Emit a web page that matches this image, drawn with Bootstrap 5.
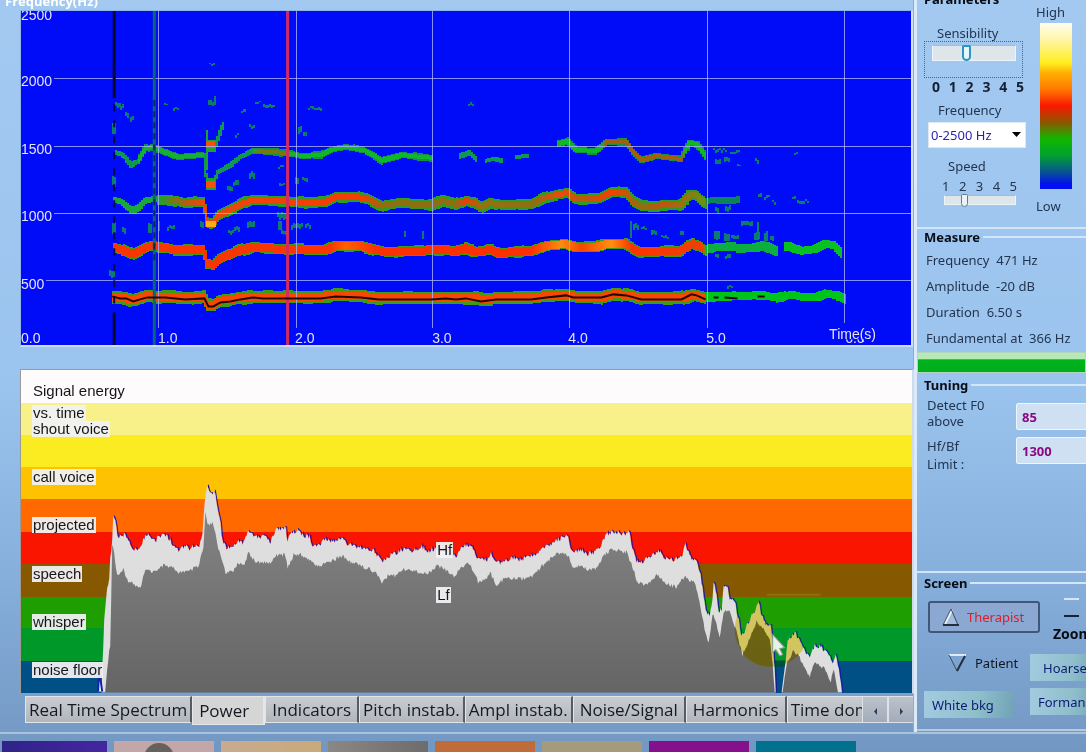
<!DOCTYPE html>
<html lang="en">
<head>
<meta charset="utf-8">
<meta name="viewport" content="width=device-width, initial-scale=1">
<title>Voice analysis</title>
<link href="https://cdn.jsdelivr.net/npm/bootstrap@5.3.0/dist/css/bootstrap.min.css" rel="stylesheet">
<style>
body{font-family:"Open Sans","Noto Sans",sans-serif;font-size:13px;line-height:18px;color:#23354f;background:linear-gradient(#a3c9f1 0,#9bc4ee 50%,#86aedb 78%,#7297c2 100%)}
.plots{padding-left:20px;min-width:0}
.axis-title{height:10px;line-height:14px;margin-left:-15px;color:#fff;font-weight:700;font-size:13px}
.axis-title span{display:block;margin-top:-6px}
.spectrogram{flex:337 1 0;background:#000cf8;border:1px solid #8fb4e6;border-right:3px solid #cfe3f7;border-bottom:2px solid #c9def6;min-height:0}
.energy{flex:325 1 0;margin-top:22px;border:1px solid #9a9a98;border-right:2px solid #cddcec;min-height:0;background:#fff}
.plot-svg{display:block;width:100%;height:100%;overflow:hidden}
.plot-svg text{font-family:"Liberation Sans",sans-serif;font-size:14px}
.axis text{fill:#e4e4f0}
.energy{position:relative}
.zones{font-family:"Liberation Sans",sans-serif;font-size:15px;line-height:16px;color:#16161a}
.zones span{position:absolute;left:11px;background:rgba(240,240,242,.95);padding:0 1px;white-space:nowrap}
.tabbar{height:38px;padding:2px 0 0 5px}
.view-tabs{min-width:0;flex:1;overflow:hidden;height:29px}
.view-tabs .nav-link{font-size:17px;line-height:20px;height:27px;padding:0 3px;color:#151a22;background:linear-gradient(#c9ccd0,#b2b5ba);border:1px solid #e0e5ea;border-right:2px solid #555c66;border-radius:0;margin:0;white-space:nowrap}
.view-tabs .nav-link.active{background:#d5d5d6;height:29px;line-height:26px;border-color:#e4e6e8;padding:0 14px 0 6px;color:#151a22}
.view-tabs .nav-link.roomy{padding:0 6px}
.scroll-btn{width:26px;height:27px;border:1px solid #dde2e8;background:linear-gradient(#bcc2cb,#a3acba);padding:0;line-height:10px}
.side{width:172px;font-family:"Noto Sans","Open Sans",sans-serif;border-left:3px solid #dbe9f8;box-shadow:-1px 0 #9aa8c0;overflow:hidden}
.group-head{font-size:13px;font-weight:700;color:#080c14;line-height:16px;margin:0;display:flex;align-items:center;gap:3px;padding-left:7px}
.group-head::after{content:"";flex:1;height:2px;background:#d3e5f8}
.group-box{border:0;border-bottom:2px solid #d3e5f8;min-width:0;margin:0;padding:0}
.params{height:229px}
.params .group-head{margin-top:-9px}
.scale-col{width:46px}
.heat{width:32px;height:166px;background:linear-gradient(#fffdf0 0,#fff6a8 10%,#ffee20 24%,#ffb000 30%,#ff7800 40%,#fa1800 50%,#8a5800 60%,#10b800 70%,#00a030 80%,#0848a0 91%,#0010f0 97%)}
.sense-box{width:99px;height:37px;border:1px dotted #4b6580;padding:3px 7px}
.ticks{font-size:14px}
.range{appearance:none;-webkit-appearance:none;display:block;margin:0;background:#dfe6ea;border:1px solid #eef4f8;border-top-color:#a9bac9}
.range::-webkit-slider-thumb{-webkit-appearance:none;width:9px;height:16px;background:#e8f4fa;border:2px solid #2b95c4;border-radius:2px 2px 5px 5px}
.range-lg{width:84px;height:16px}
.range-sm{width:72px;height:10px}
.range-sm::-webkit-slider-thumb{width:7px;height:13px;border:1px solid #66788a}
.freq{width:98px;height:26px;font-size:13px;line-height:18px;padding:3px 20px 3px 2px;border:1px solid #dde8f2;border-radius:0;color:#2a1fae;background-size:9px 6px;background-position:right 4px center;background-image:url("data:image/svg+xml,%3csvg xmlns='http://www.w3.org/2000/svg' viewBox='0 0 9 6'%3e%3cpath d='M0 0h9L4.5 5z' fill='%23000'/%3e%3c/svg%3e")}
.measure{height:144px}
.reading{line-height:26px;height:26px;padding-left:9px;white-space:pre}
.level{height:21px;border-radius:0;background:#c8e8c8;margin-top:1px;border:1px solid #b3d4be}
.level .progress-bar{background:linear-gradient(#b5eab5 0,#b5eab5 30%,#00b41c 36%,#00ac1c 100%)}
.tuning{height:196px;margin-top:4px}
.tune-label{line-height:16px;width:99px;padding-left:10px}
.tune-input{flex:1;min-width:0;width:60px;height:27px;border:1px solid #eef5fc;border-radius:2px;background:#cfe0f3;color:#8a0a84;font-size:13px;font-weight:700;padding:0 5px;margin-right:-3px}
.screen{height:156px;margin-top:2px;border-bottom:2px solid #b9c9da}
.screen-grid{display:grid;grid-template-columns:112px 1fr;column-gap:0;padding:10px 0 0 7px}
.mode{font-size:13px;line-height:18px;white-space:nowrap;border:0;background:none;color:#101820;padding:0;display:flex;align-items:center}
.mode-on{width:112px;height:32px;border:2px solid #3f5878;border-radius:3px;background:#8ba8d2;color:#d8202c;gap:7px;padding:0 0 0 12px}
.mode-off{height:28px;padding:0 0 0 20px;gap:8px;margin-top:16px}
.soft{font-size:13px;line-height:26px;height:27px;border:0;padding:0 8px;text-align:left;white-space:nowrap;color:#0c1c74;background:linear-gradient(100deg,#a3cbe0,#8fbecb 60%,#6fa3b5)}
.zoom-stack{padding-left:17px;color:#080c14;font-weight:700;font-size:14px;line-height:16px;white-space:nowrap}
.dash{width:15px;height:2px;margin-left:11px}
.film{height:20px;border-top:2px solid #a8c4dc;padding:7px 0 0 2px;gap:7px;overflow:hidden}
.film div{width:100px;flex:0 0 auto;height:12px;overflow:hidden}
.head-shape{width:30px!important;height:30px!important;border-radius:50%;background:#66605f;margin:2px 0 0 30px}
</style>
</head>
<body class="d-flex flex-column vh-100 overflow-hidden">
<div class="d-flex flex-fill" style="min-height:0">
<main class="plots d-flex flex-column flex-fill">
  <div class="axis-title"><span>Frequency(Hz)</span></div>
  <div class="spectrogram">
    <svg class="plot-svg" role="img" aria-label="Spectrogram">
      <svg viewBox="21 11 888 334" preserveAspectRatio="none" width="100%" height="100%">
        <defs><linearGradient id="g3" gradientUnits="userSpaceOnUse" x1="0" x2="1000" y1="0" y2="0">
          <stop offset=".16" stop-color="#20a030"/><stop offset=".175" stop-color="#8a7010"/><stop offset=".2" stop-color="#e84810"/><stop offset=".36" stop-color="#f83c00"/><stop offset=".385" stop-color="#8c7010"/><stop offset=".455" stop-color="#906c10"/><stop offset=".465" stop-color="#f03c08"/><stop offset=".48" stop-color="#987010"/><stop offset=".53" stop-color="#8c7010"/><stop offset=".56" stop-color="#f04808"/><stop offset=".58" stop-color="#b05c10"/><stop offset=".61" stop-color="#f44000"/><stop offset=".64" stop-color="#8c7010"/><stop offset=".66" stop-color="#c05410"/><stop offset=".703" stop-color="#709010"/><stop offset=".706" stop-color="#109058"/></linearGradient>
        <linearGradient id="g4" gradientUnits="userSpaceOnUse" x1="0" x2="1000" y1="0" y2="0">
          <stop offset=".25" stop-color="#18b030"/><stop offset=".26" stop-color="#787810"/><stop offset=".288" stop-color="#787810"/><stop offset=".29" stop-color="#10b828"/><stop offset=".6" stop-color="#10b828"/><stop offset=".605" stop-color="#a06010"/><stop offset=".68" stop-color="#a06010"/><stop offset=".685" stop-color="#10b828"/></linearGradient>
        <linearGradient id="g2" gradientUnits="userSpaceOnUse" x1="0" x2="1000" y1="0" y2="0">
          <stop offset=".33" stop-color="#fa3600"/><stop offset=".345" stop-color="#ff6000"/><stop offset=".375" stop-color="#fc3000"/><stop offset=".53" stop-color="#fc3000"/><stop offset=".56" stop-color="#ff8c10"/><stop offset=".58" stop-color="#f84400"/><stop offset=".61" stop-color="#ff9010"/><stop offset=".63" stop-color="#fc3400"/><stop offset=".701" stop-color="#f04000"/><stop offset=".706" stop-color="#10c020"/></linearGradient></defs>
        <g id="tracks" shape-rendering="crispEdges"></g>
        <g stroke="#a9b2ff" stroke-opacity=".8" stroke-width="1" shape-rendering="crispEdges">
          <path d="M54 78H912M54 146H912M54 213H912M46 280H912"/>
          <path d="M158 11V328M296 11V328M432 11V328M568 11V328M706 11V328M843 11V323"/>
        </g>
        <path d="M154 11V346" stroke="#0b6578" stroke-width="3"/>
        <path d="M154 100V260" stroke="#042c50" stroke-width="2" stroke-dasharray="6 5"/>
        <path d="M114 11V98" stroke="#050830" stroke-width="3"/>
        <path d="M114 104V310" stroke="#050850" stroke-width="2" stroke-dasharray="7 9"/>
        <path d="M114 312V346" stroke="#050830" stroke-width="3"/>
        <path d="M287 11V346" stroke="#d32a62" stroke-width="3"/>
        <g id="voice" fill="none"></g>
      </svg>
      <g class="axis">
        <text x="0" y="2.6%">2500</text><text x="0" y="22.4%">2000</text><text x="0" y="42.8%">1500</text><text x="0" y="62.8%">1000</text><text x="0" y="83%">500</text>
        <text x="0" y="99.2%">0.0</text><text x="15.4%" y="99.2%">1.0</text><text x="30.8%" y="99.2%">2.0</text><text x="46.2%" y="99.2%">3.0</text><text x="61.5%" y="99.2%">4.0</text><text x="77%" y="99.2%">5.0</text>
        <text x="92.6%" y="99.2%">6.0</text>
        <rect x="90.5%" y="93.4%" width="54" height="16" fill="#000cf8"/>
        <text x="90.8%" y="98%">Time(s)</text>
      </g>
    </svg>
  </div>
  <div class="energy">
    <svg class="plot-svg" viewBox="21 370 889 323" preserveAspectRatio="none" role="img" aria-label="Signal energy">
      <defs><clipPath id="hfClip"><path id="hfClipPath"/></clipPath>
      <linearGradient id="lf" x2="0" y2="1"><stop stop-color="#838383"/><stop offset="1" stop-color="#656565"/></linearGradient></defs>
      <g shape-rendering="crispEdges"><path fill="#fdfbfc" d="M21 370h890v33H21z"/><path fill="#f8f18a" d="M21 403h890v32H21z"/><path fill="#fbec22" d="M21 435h890v32H21z"/><path fill="#ffc200" d="M21 467h890v32H21z"/><path fill="#ff6900" d="M21 499h890v33H21z"/><path fill="#f91500" d="M21 532h890v32H21z"/><path fill="#865800" d="M21 564h890v33H21z"/><path fill="#1e9e00" d="M21 597h890v31H21z"/><path fill="#009828" d="M21 628h890v33H21z"/><path fill="#005086" d="M21 661h890v32H21z"/></g>
      <path d="M765 595h54" stroke="#8a7200" stroke-width="2"/>
      <path d="M760 661h36q-12 8-26 6z" fill="#00503c"/>
      <path id="hfEdge" fill="none" stroke="#2016a0" stroke-width="1" transform="translate(1 0)"/>
      <path id="hfArea" fill="#dedede"/>
      <path id="lfArea" fill="url(#lf)"/>
      <path d="M98 692l1-22 3 22" fill="#fff" stroke="#1424a8" stroke-width="2"/>
      <circle cx="770" cy="630" r="37" fill="#f2e26c" style="mix-blend-mode:multiply" clip-path="url(#hfClip)"/>
      <path d="M741 655L748 640 755 622 762 630 768 640 771 667Q752 668 741 655z" fill="#6e6200" fill-opacity=".6"/>
      <path d="M771 635v18l3-3 4 6 3-1-3-6 5-1z" fill="#e8f0e8" stroke="#8aa08a" stroke-width="1"/>
    </svg>
    <div class="zones">
      <span style="top:4%;background:none">Signal energy</span><span style="top:10.6%">vs. time</span><span style="top:15.6%">shout voice</span><span style="top:30.4%">call voice</span><span style="top:45.5%">projected</span><span style="top:60.5%">speech</span><span style="top:75.4%">whisper</span><span style="top:90.4%">noise floor</span>
      <span style="top:53.2%;left:46.6%">Hf</span><span style="top:67%;left:46.6%">Lf</span>
    </div>
  </div>
  <div class="tabbar d-flex align-items-start">
    <div class="nav view-tabs flex-nowrap" role="tablist">
      <button class="nav-link" role="tab">Real Time Spectrum</button><button class="nav-link active" role="tab" aria-selected="true">Power</button><button class="nav-link roomy" role="tab">Indicators</button><button class="nav-link" role="tab">Pitch instab.</button><button class="nav-link" role="tab">Ampl instab.</button><button class="nav-link roomy" role="tab">Noise/Signal</button><button class="nav-link roomy" role="tab">Harmonics</button><button class="nav-link" role="tab">Time domain</button>
    </div>
    <button class="scroll-btn" aria-label="Previous tabs"><svg width="5" height="7"><path d="M4 0v7L1 3.5z" fill="#2c3c58"/></svg></button>
    <button class="scroll-btn" aria-label="Next tabs"><svg width="5" height="7"><path d="M1 0v7l3-3.5z" fill="#2c3c58"/></svg></button>
  </div>
</main>
<aside class="side flex-shrink-0">
  <fieldset class="group-box params">
    <legend class="group-head">Parameters</legend>
    <div class="d-flex">
      <div style="width:115px">
        <div style="padding:18px 0 0 7px">
          <label for="sens" class="d-block" style="padding-left:13px;line-height:16px">Sensibility</label>
          <div class="sense-box"><input class="range range-lg" type="range" id="sens" min="0" max="5" step="0.1" value="2"></div>
          <div class="ticks fw-bold d-flex justify-content-between" style="width:100px;padding-left:8px;color:#142034"><span>0</span><span>1</span><span>2</span><span>3</span><span>4</span><span>5</span></div>
          <label for="freq" class="d-block" style="padding:5px 0 3px 14px">Frequency</label>
          <select id="freq" class="form-select freq" style="margin-left:4px"><option>0-2500 Hz</option></select>
          <label for="speed" class="d-block" style="padding:9px 0 2px 24px">Speed</label>
          <div class="d-flex justify-content-between" style="width:93px;padding-left:18px"><span>1</span><span>2</span><span>3</span><span>4</span><span>5</span></div>
          <input class="range range-sm" type="range" id="speed" min="1" max="5" value="2" style="margin-left:20px">
        </div>
      </div>
      <div class="scale-col">
        <div style="line-height:18px;padding:0 0 2px 4px;margin-top:-4px">High</div>
        <div class="heat ms-2"></div>
        <div style="padding:8px 0 0 4px">Low</div>
      </div>
    </div>
  </fieldset>
  <fieldset class="group-box measure">
    <legend class="group-head" style="padding-bottom:2px">Measure</legend>
    <div class="reading">Frequency  471 Hz</div>
    <div class="reading">Amplitude  -20 dB</div>
    <div class="reading">Duration  6.50 s</div>
    <div class="reading">Fundamental at  366 Hz</div>
    <div class="progress level" role="progressbar" aria-label="Level"><div class="progress-bar w-100"></div></div>
  </fieldset>
  <fieldset class="group-box tuning">
    <legend class="group-head">Tuning</legend>
    <div class="d-flex align-items-start" style="padding-top:4px"><label for="f0" class="tune-label">Detect F0<br>above</label><input id="f0" class="tune-input" style="margin-top:6px" value="85"></div>
    <div class="d-flex align-items-start" style="padding-top:7px"><label for="hf" class="tune-label" style="line-height:18px">Hf/Bf<br>Limit :</label><input id="hf" class="tune-input" value="1300"></div>
  </fieldset>
  <fieldset class="group-box screen">
    <legend class="group-head">Screen</legend>
    <div class="screen-grid">
      <div style="padding-left:4px">
        <button class="mode mode-on"><svg width="18" height="20"><path d="M9 2l7 16H2z" fill="#a4bbdc"/><path d="M3 17L10 3" stroke="#eef4fa" stroke-width="2" fill="none"/><path d="M1 18L9 2" stroke="#4c5c70" stroke-width="1" fill="none"/><path d="M9 2l7 16" stroke="#3a4a5c" stroke-width="1" fill="none"/><path d="M1 18h16" stroke="#22303c" stroke-width="2" fill="none"/></svg>Therapist</button>
        <button class="mode mode-off"><svg width="19" height="20"><path d="M1 2h17" stroke="#dfeaf6" stroke-width="2" fill="none"/><path d="M1 2l8 16" stroke="#3a4a5c" stroke-width="1" fill="none"/><path d="M17 3L9 18" stroke="#22303c" stroke-width="2" fill="none"/></svg>Patient</button>
      </div>
      <div class="zoom-stack"><div class="dash" style="background:#d8e6f4;margin-bottom:15px;margin-top:-3px"></div><div class="dash" style="background:#1a222c;margin-bottom:9px"></div>Zoom
        <button class="soft d-block" style="margin:12px 0 0 -23px;width:70px;padding-left:13px">Hoarse</button>
      </div>
      <button class="soft" style="width:90px;margin:10px 0 0 0">White bkg</button>
      <button class="soft" style="width:70px;margin:7px 0 0 -6px">Forman</button>
    </div>
  </fieldset>
</aside>
</div>
<div class="film d-flex">
  <div style="width:105px;background:linear-gradient(90deg,#2f2388,#4526a0)"></div><div style="background:#c2a6a8"><div class="head-shape"></div></div><div style="background:linear-gradient(90deg,#c8ab90,#c8a97a)"></div><div style="background:linear-gradient(90deg,#8a8784,#6e6c6c)"></div><div style="background:#bf6c3a"></div><div style="background:#a49b7c"></div><div style="background:#85108c"></div><div style="background:#00728e"></div>
</div>
<script src="https://cdn.jsdelivr.net/npm/bootstrap@5.3.0/dist/js/bootstrap.bundle.min.js"></script>
<script>
// Small repeatable noise source so the traces look the same at every load.
let seed = 11;
const rnd = () => (seed = (seed * 16807) % 2147483647) / 2147483647;
const parse = s => s.trim().split(/\s+/).map(p => p.split(',').map(Number));
const at = (pts, x) => {
  for (let i = 1; i < pts.length; i++) if (x <= pts[i][0]) {
    const [a, b] = pts[i - 1], [c, d] = pts[i];
    return c === a ? d : b + (d - b) * (x - a) / (c - a);
  }
  return pts[pts.length - 1][1];
};
const NS = 'http://www.w3.org/2000/svg';
const add = (id, d, fill) => {
  const p = document.createElementNS(NS, 'path');
  p.setAttribute('d', d); p.setAttribute('fill', fill);
  document.getElementById(id).append(p);
};
// One harmonic: a blocky green rim with a hotter core.
function track(str, rim, core, rimFill, coreFill) {
  const pts = parse(str), end = pts[pts.length - 1][0]; let a = '', b = '', up = 0, dn = 0, n = 0;
  for (let x = pts[0][0]; x < end; x += 2) {
    const y0 = at(pts, x), y1 = at(pts, x + 2), y = Math.round(Math.min(y0, y1)), g = Math.round(Math.abs(y1 - y0));
    if (n++ % 5 === 0) { up = rnd() < .3 ? 1 : 0; dn = rnd() < .3 ? 1 : 0; }
    a += `M${x} ${y - rim - up}h2v${2 * rim + g + up + dn}h-2z`;
    if (core) b += `M${x} ${y - core}h2v${2 * core + g}h-2z`;
  }
  add('tracks', a, rimFill);
  if (core) add('tracks', b, coreFill);
}
track('112,298 126,298 133,300 147,296 165,297 185,298 204,297 208,305 214,305 220,301 240,298 252,297 320,297 335,295 360,296 378,298 430,298 475,298 480,299 505,298 530,298 545,296 565,295 575,297 600,297 612,294 625,295 640,298 680,298 690,295 704,298', 6, 4, '#3c9c18', '#f84800');
track('704,297 722,297 760,295 775,298 790,295 800,297 815,297 825,294 835,295 844,299', 4, 0, '#00c41c');
track('113,248 122,250 131,254 138,252 146,247 153,246 165,248 175,250 204,250 207,264 213,265 220,258 230,254 240,250 252,247 280,249 325,250 335,246 360,246 375,250 385,252 440,250 455,251 465,248 475,252 490,250 500,253 530,251 545,246 565,244 575,247 595,247 605,244 625,244 632,249 640,252 680,251 690,244 697,246 704,251', 5, 4, '#3c9c18', 'url(#g2)');
track('704,249 715,247 750,248 760,245 770,249 776,252', 4, 0, '#0cae40');
track('782,246 788,246 800,251 815,249 823,244 832,245 840,253', 4, 0, '#08c020');
track('113,200 122,202 131,210 138,208 146,200 157,199', 3, 0, '#18a83c');
track('157,200 170,200 185,203 204,202 207,222 212,224 218,216 230,209 240,204 252,200 280,201 310,203 325,202 335,197 355,197 370,200 380,206 400,203 430,205 441,201 455,204 465,201 473,202 480,207 490,203 500,205 530,204 543,198 560,194 568,193 575,199 600,198 610,192 625,193 632,201 640,206 680,205 688,195 694,195 704,204', 5, 3, '#2c9c24', 'url(#g3)');
track('704,201 712,200 738,200', 3, 0, '#0c8458');
['115,152 122,154 131,165 138,161', '204,155 207,185 212,186 218,172 230,165 240,157 252,151', '458,156 468,152 476,160', '484,161 494,159 502,160', '514,157 527,156'].forEach(s => track(s, 2, 0, '#109850'));
['138,161 146,148 155,147 165,152 178,157 204,155', '252,151 285,153 300,156 320,155 330,150 345,147 365,151 380,160 400,155 432,158', '556,144 566,141 575,150 595,151 605,142 625,142 632,152 640,160 655,156 680,159 688,143 695,144 704,157'].forEach(s => track(s, 3, 2, '#149048', 'url(#g4)'));
track('214,150 223,125', 2, 0, '#109850');
// Hot spots of the attack, then faint speckles.
add('tracks', 'M206 140h10v12h-10zM206 178h10v12h-10zM206 130h2v40h-2z', '#20a030');
add('tracks', 'M206 141h9v7h-9zM206 181h9v7h-9z', '#f85008');
add('tracks', 'M206 221h10v6h-10z', '#ffa818');
const dots = '115,102,6,5 120,105,4,4 125,112,3,5 130,117,3,5 164,104,3,2 173,107,5,3 208,101,7,5 214,95,2,6 254,101,6,2 262,104,12,3 307,107,14,3 241,110,4,3 248,125,5,4 235,134,3,3 297,126,3,7 302,131,3,4 112,124,3,12 112,176,3,10 112,222,4,12 122,227,3,6 148,224,3,10 158,220,2,10 167,226,8,4 248,172,5,6 227,187,6,5 233,181,6,5 246,221,7,6 228,231,5,4 234,226,5,5 276,213,10,6 277,221,4,10 280,231,6,4 290,224,12,5 304,224,5,4 294,177,4,7 301,178,6,4 278,183,6,3 277,166,5,2 200,222,4,6 109,270,5,7 467,103,6,3 403,231,2,6 421,231,2,8 629,222,2,18 632,224,6,6 640,227,6,3 650,230,6,5 660,236,8,3 679,231,3,4 711,149,14,3 728,151,10,3 713,159,5,5 722,158,6,5 735,164,4,2 753,159,3,4 792,152,4,3 756,193,3,4 762,196,6,3 770,201,4,3 790,197,4,3 795,200,12,3 713,207,4,5 723,206,6,5 739,222,12,5 755,222,2,18 752,233,5,8 762,232,3,10 768,236,3,5 712,232,6,9 722,234,5,8 729,236,8,4 713,255,4,4 723,255,6,4 725,285,5,3 209,64,5,2';
// Each speckle is broken into two-pixel columns of uneven height.
let faint = '';
for (const [x, y, w, h] of parse(dots)) for (let i = 0; i < w; i += 2) {
  const t = Math.floor(rnd() * 3);
  faint += `M${x + i} ${y + t - 1}h2v${Math.max(1, h - Math.floor(rnd() * 2))}h-2z`;
}
add('tracks', faint, '#0c7c6c');
// Detected fundamental.
const f0 = parse('112,296 120,298 126,298 133,301 140,299 147,297 165,297 185,299 204,298 208,306 213,306 220,302 230,301 240,299 252,297 262,298 320,298 335,296 360,297 378,299 430,299 445,298 455,299 465,298 480,301 495,299 530,299 545,297 565,295 572,297 600,297 612,294 625,295 640,299 680,299 690,294 695,295 704,299');
const line = document.createElementNS(NS, 'path');
line.setAttribute('d', 'M' + f0.join('L') + 'M712 297h5M723 297l13 1M756 296h7');
line.setAttribute('stroke', '#200808'); line.setAttribute('stroke-width', 2);
document.getElementById('voice').append(line);

// Energy envelope, roughened a little around its measured points.
function envelope(str, amp) {
  const pts = parse(str); let d = '';
  for (let x = pts[0][0]; x <= pts[pts.length - 1][0]; x++) {
    const y = at(pts, x); d += `L${x} ${Math.min(693, Math.round(y + (y > 685 ? 0 : (rnd() - .5) * amp)))}`;
  }
  return `M${pts[0][0]} 693${d}L${pts[pts.length - 1][0]} 693`;
}
const hf = envelope('101,692 103,650 103,627 105,610 107,590 109,578 110,560 112,540 113,517 115,522 117,537 124,535 128,541 132,548 137,550 140,548 143,540 147,534 150,538 155,542 158,537 164,535 170,540 173,546 178,550 186,545 189,551 192,547 199,547 202,535 204,505 206,488 207,486 208,492 211,495 214,493 217,510 220,525 222,540 226,548 232,547 237,541 242,543 245,535 249,531 254,537 266,537 270,542 273,535 276,529 285,529 287,543 290,533 297,530 303,536 309,537 311,545 318,546 323,540 335,541 341,538 347,544 356,547 364,549 373,551 381,562 388,556 395,554 400,550 418,551 421,547 426,551 434,549 445,553 456,556 461,546 471,546 476,559 486,560 490,553 495,564 502,562 512,558 518,560 535,555 543,548 552,542 560,538 566,536 571,553 580,550 586,555 596,551 600,545 605,535 612,532 625,535 627,530 631,548 635,561 641,562 650,555 658,552 664,558 672,560 680,558 684,543 688,556 695,563 699,575 702,595 705,614 708,616 711,600 712,582 714,590 717,612 720,610 722,586 726,586 728,598 733,602 737,620 739,636 744,630 750,615 757,604 760,615 764,624 769,626 771,645 773,670 774,692', 5)
  + envelope('780,692 784,660 786,640 791,636 794,633 797,640 803,652 808,659 813,645 820,648 828,657 831,662 834,653 837,670 840,692', 5);
for (const id of ['hfArea', 'hfEdge', 'hfClipPath']) document.getElementById(id).setAttribute('d', hf);
document.getElementById('lfArea').setAttribute('d', envelope('105,692 107,670 110,645 111,600 112,543 114,555 117,575 123,570 128,582 134,585 140,588 145,570 150,572 158,569 164,565 171,566 178,573 187,571 198,566 203,550 205,512 207,525 213,524 217,545 221,560 225,573 232,572 238,563 243,565 248,553 255,561 270,564 276,555 284,555 287,567 293,555 300,555 310,560 317,567 325,564 341,556 350,562 365,568 375,572 381,583 388,575 395,576 403,570 428,574 436,566 446,570 454,577 460,567 468,564 474,574 477,583 484,580 489,573 495,585 505,578 523,579 532,577 540,567 555,555 562,552 568,558 572,568 580,565 586,571 596,568 603,555 610,550 625,552 632,570 636,582 645,586 655,575 667,585 675,587 683,577 693,583 698,600 703,630 707,643 711,615 714,620 718,640 722,612 727,610 733,625 737,640 741,655 748,640 755,622 762,630 768,640 771,665 773,692', 4)
  + envelope('781,692 785,665 791,652 797,656 803,668 808,677 813,664 822,668 829,682 832,670 836,692', 4));
</script>
</body>
</html>
